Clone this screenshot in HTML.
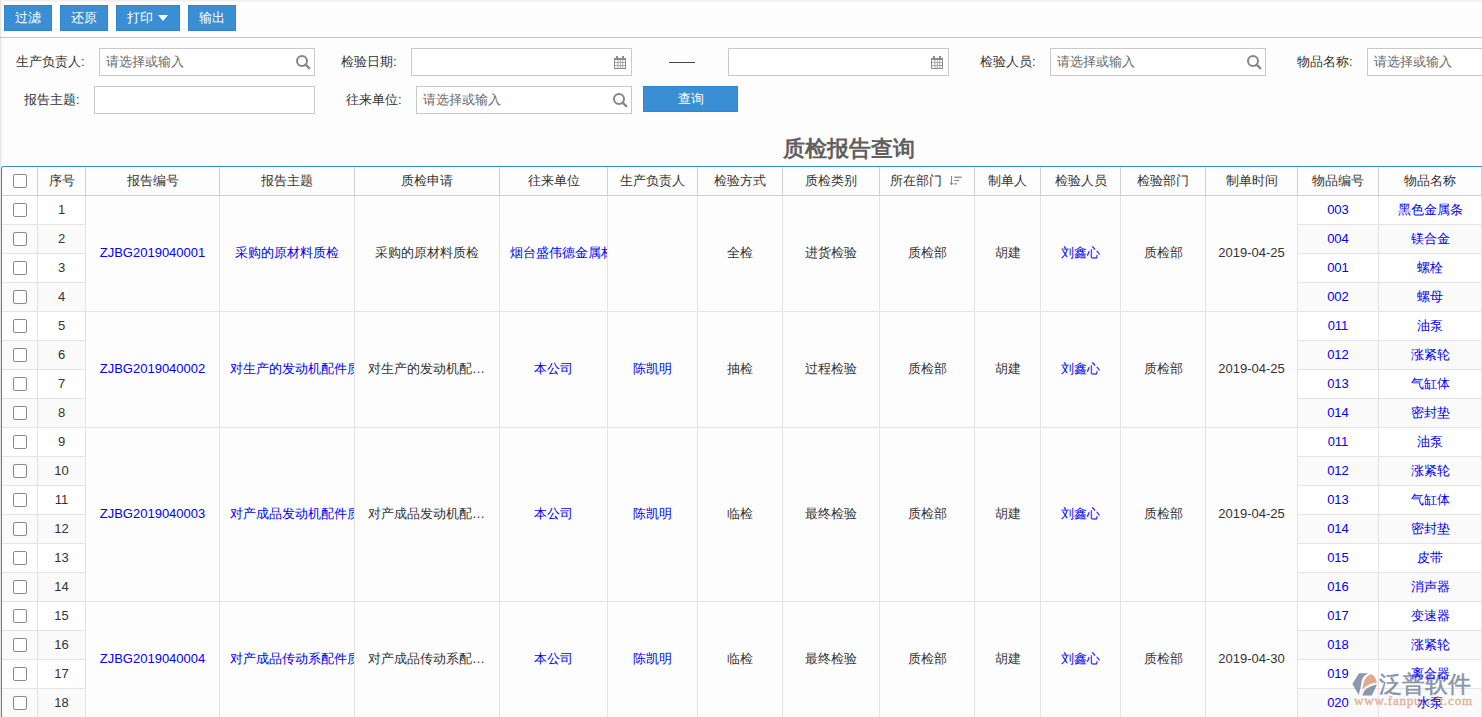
<!DOCTYPE html>
<html><head><meta charset="utf-8"><title>质检报告查询</title>
<style>
*{box-sizing:border-box;margin:0;padding:0}
html,body{width:1482px;height:717px;overflow:hidden;background:#fdfdfd;font-family:"Liberation Sans",sans-serif;font-size:13px;color:#333}
.a{position:absolute}
.btn{position:absolute;top:5px;height:26px;background:#3a8fd4;border:1px solid #2f86cf;color:#fff;font-size:13px;line-height:23px;text-align:center}
.lbl{position:absolute;font-size:13px;color:#333;line-height:15px;white-space:nowrap}
.inp{position:absolute;height:28px;border:1px solid #c9c9c9;background:#fff}
.ph{position:absolute;left:6px;top:5px;font-size:13px;line-height:15px;color:#6a6a6a;white-space:nowrap}
.vl{position:absolute;width:1px;background:#e3e3e3}
.hl{position:absolute;height:1px;background:#e3e3e3}
.c{position:absolute;z-index:2;text-align:center;white-space:nowrap;overflow:hidden;line-height:15px}
.lk{color:#0000ff}
.cb{position:absolute;width:14px;height:14px;border:1px solid #8a8a8a;border-radius:2px;background:#fff}
</style></head><body>

<div class="a" style="left:0;top:0;width:1482px;height:1px;background:#efefef"></div>
<div class="a" style="left:0;top:1px;width:1482px;height:1px;background:#f8f8f8"></div>
<div class="a" style="left:0;top:0;width:1px;height:717px;background:#e6e6e6"></div>
<div class="a" style="left:1px;top:0;width:1px;height:717px;background:#f3f3f3"></div>
<div class="a" style="left:2px;top:0;width:1px;height:717px;background:#fafafa"></div>
<div class="btn" style="left:4px;width:48px">过滤</div>
<div class="btn" style="left:60px;width:48px">还原</div>
<div class="btn" style="left:116px;width:64px;text-align:left;padding-left:10px">打印<span class="a" style="left:41px;top:9px;width:0;height:0;border-left:5px solid transparent;border-right:5px solid transparent;border-top:6px solid #fff"></span></div>
<div class="btn" style="left:188px;width:48px">输出</div>
<div class="a" style="left:0;top:37px;width:1482px;height:1px;background:#c6c6c6"></div>
<div class="lbl" style="left:16px;top:54px">生产负责人:</div>
<div class="inp" style="left:99px;top:48px;width:216px"><span class="ph">请选择或输入</span><svg class="a" style="right:2px;top:4px" width="18" height="18" viewBox="0 0 18 18"><circle cx="8" cy="8" r="5" fill="none" stroke="#858585" stroke-width="2"/><path d="M11.6 11.6 L15.3 15.3" stroke="#858585" stroke-width="2.3" stroke-linecap="round"/></svg></div>
<div class="lbl" style="left:341px;top:54px">检验日期:</div>
<div class="inp" style="left:411px;top:48px;width:221px"><svg class="a" style="right:5px;top:7px" width="12" height="13" viewBox="0 0 12 13"><g fill="#8a8a8a"><rect x="2" y="0" width="2" height="3"/><rect x="8" y="0" width="2" height="3"/><rect x="0" y="2" width="12" height="2"/><rect x="0" y="2" width="1" height="11"/><rect x="11" y="2" width="1" height="11"/><rect x="0" y="12" width="12" height="1"/></g><g fill="#a8a8a8"><rect x="3.4" y="4" width="1" height="8"/><rect x="5.8" y="4" width="1" height="8"/><rect x="8.2" y="4" width="1" height="8"/><rect x="1" y="6" width="10" height="1"/><rect x="1" y="9" width="10" height="1"/></g></svg></div>
<div class="a" style="left:669px;top:62px;width:26px;height:1px;background:#444"></div>
<div class="inp" style="left:728px;top:48px;width:221px"><svg class="a" style="right:5px;top:7px" width="12" height="13" viewBox="0 0 12 13"><g fill="#8a8a8a"><rect x="2" y="0" width="2" height="3"/><rect x="8" y="0" width="2" height="3"/><rect x="0" y="2" width="12" height="2"/><rect x="0" y="2" width="1" height="11"/><rect x="11" y="2" width="1" height="11"/><rect x="0" y="12" width="12" height="1"/></g><g fill="#a8a8a8"><rect x="3.4" y="4" width="1" height="8"/><rect x="5.8" y="4" width="1" height="8"/><rect x="8.2" y="4" width="1" height="8"/><rect x="1" y="6" width="10" height="1"/><rect x="1" y="9" width="10" height="1"/></g></svg></div>
<div class="lbl" style="left:980px;top:54px">检验人员:</div>
<div class="inp" style="left:1050px;top:48px;width:216px"><span class="ph">请选择或输入</span><svg class="a" style="right:2px;top:4px" width="18" height="18" viewBox="0 0 18 18"><circle cx="8" cy="8" r="5" fill="none" stroke="#858585" stroke-width="2"/><path d="M11.6 11.6 L15.3 15.3" stroke="#858585" stroke-width="2.3" stroke-linecap="round"/></svg></div>
<div class="lbl" style="left:1297px;top:54px">物品名称:</div>
<div class="inp" style="left:1367px;top:48px;width:140px"><span class="ph">请选择或输入</span></div>
<div class="lbl" style="left:24px;top:92px">报告主题:</div>
<div class="inp" style="left:94px;top:86px;width:221px"></div>
<div class="lbl" style="left:346px;top:92px">往来单位:</div>
<div class="inp" style="left:416px;top:86px;width:216px"><span class="ph">请选择或输入</span><svg class="a" style="right:2px;top:4px" width="18" height="18" viewBox="0 0 18 18"><circle cx="8" cy="8" r="5" fill="none" stroke="#858585" stroke-width="2"/><path d="M11.6 11.6 L15.3 15.3" stroke="#858585" stroke-width="2.3" stroke-linecap="round"/></svg></div>
<div class="btn" style="left:643px;top:86px;width:95px">查询</div>
<div class="a" style="left:783px;top:136px;font-size:22px;font-weight:bold;color:#606060;line-height:26px;white-space:nowrap">质检报告查询</div>
<div class="a" style="left:1px;top:166px;width:1502px;height:571px;border-top:1px solid #3a8dd0;border-left:1px solid #3a86c8;border-top-left-radius:3px;z-index:3"></div>
<div class="a" style="left:2px;top:195px;width:1482px;height:1px;background:#cfcfcf"></div>
<div class="a" style="left:37px;top:167px;width:1px;height:28px;background:#d0d0d0"></div>
<div class="a" style="left:85px;top:167px;width:1px;height:28px;background:#d0d0d0"></div>
<div class="a" style="left:219px;top:167px;width:1px;height:28px;background:#d0d0d0"></div>
<div class="a" style="left:354px;top:167px;width:1px;height:28px;background:#d0d0d0"></div>
<div class="a" style="left:499px;top:167px;width:1px;height:28px;background:#d0d0d0"></div>
<div class="a" style="left:607px;top:167px;width:1px;height:28px;background:#d0d0d0"></div>
<div class="a" style="left:697px;top:167px;width:1px;height:28px;background:#d0d0d0"></div>
<div class="a" style="left:782px;top:167px;width:1px;height:28px;background:#d0d0d0"></div>
<div class="a" style="left:879px;top:167px;width:1px;height:28px;background:#d0d0d0"></div>
<div class="a" style="left:974px;top:167px;width:1px;height:28px;background:#d0d0d0"></div>
<div class="a" style="left:1040px;top:167px;width:1px;height:28px;background:#d0d0d0"></div>
<div class="a" style="left:1120px;top:167px;width:1px;height:28px;background:#d0d0d0"></div>
<div class="a" style="left:1205px;top:167px;width:1px;height:28px;background:#d0d0d0"></div>
<div class="a" style="left:1297px;top:167px;width:1px;height:28px;background:#d0d0d0"></div>
<div class="a" style="left:1378px;top:167px;width:1px;height:28px;background:#d0d0d0"></div>
<div class="a" style="left:1481px;top:167px;width:1px;height:28px;background:#d0d0d0"></div>
<div class="cb" style="left:13px;top:174px"></div>
<div class="c" style="left:38px;top:173px;width:47px">序号</div>
<div class="c" style="left:86px;top:173px;width:133px">报告编号</div>
<div class="c" style="left:220px;top:173px;width:134px">报告主题</div>
<div class="c" style="left:355px;top:173px;width:144px">质检申请</div>
<div class="c" style="left:500px;top:173px;width:107px">往来单位</div>
<div class="c" style="left:608px;top:173px;width:89px">生产负责人</div>
<div class="c" style="left:698px;top:173px;width:84px">检验方式</div>
<div class="c" style="left:783px;top:173px;width:96px">质检类别</div>
<div class="c" style="left:890px;top:173px;text-align:left">所在部门</div>
<div class="c" style="left:975px;top:173px;width:65px">制单人</div>
<div class="c" style="left:1041px;top:173px;width:79px">检验人员</div>
<div class="c" style="left:1121px;top:173px;width:84px">检验部门</div>
<div class="c" style="left:1206px;top:173px;width:91px">制单时间</div>
<div class="c" style="left:1298px;top:173px;width:80px">物品编号</div>
<div class="c" style="left:1379px;top:173px;width:102px">物品名称</div>
<svg class="a" style="left:948px;top:175px" width="14" height="11" viewBox="0 0 14 11"><g fill="#888"><rect x="3" y="1" width="1.1" height="8.5"/><path d="M1.6 8 L3.55 10.2 L5.5 8 Z"/><rect x="6.3" y="1.6" width="7.4" height="1.3"/><rect x="6.3" y="4.9" width="4.8" height="1.2"/><rect x="6.3" y="8.2" width="2.5" height="1.3"/></g></svg>
<div class="a" style="left:2px;top:196px;width:35px;height:28px;background:#fff"></div>
<div class="a" style="left:38px;top:196px;width:47px;height:28px;background:#fff"></div>
<div class="a" style="left:1298px;top:196px;width:80px;height:28px;background:#fff"></div>
<div class="a" style="left:1379px;top:196px;width:102px;height:28px;background:#fff"></div>
<div class="cb" style="left:13px;top:203px"></div>
<div class="c" style="left:38px;top:202px;width:47px">1</div>
<div class="c lk" style="left:1298px;top:202px;width:80px">003</div>
<div class="c lk" style="left:1379px;top:202px;width:102px">黑色金属条</div>
<div class="hl" style="left:2px;top:224px;width:35px"></div>
<div class="hl" style="left:38px;top:224px;width:47px"></div>
<div class="hl" style="left:1298px;top:224px;width:80px"></div>
<div class="hl" style="left:1379px;top:224px;width:102px"></div>
<div class="a" style="left:2px;top:225px;width:35px;height:28px;background:#fafafa"></div>
<div class="a" style="left:38px;top:225px;width:47px;height:28px;background:#fafafa"></div>
<div class="a" style="left:1298px;top:225px;width:80px;height:28px;background:#fafafa"></div>
<div class="a" style="left:1379px;top:225px;width:102px;height:28px;background:#fafafa"></div>
<div class="cb" style="left:13px;top:232px"></div>
<div class="c" style="left:38px;top:231px;width:47px">2</div>
<div class="c lk" style="left:1298px;top:231px;width:80px">004</div>
<div class="c lk" style="left:1379px;top:231px;width:102px">镁合金</div>
<div class="hl" style="left:2px;top:253px;width:35px"></div>
<div class="hl" style="left:38px;top:253px;width:47px"></div>
<div class="hl" style="left:1298px;top:253px;width:80px"></div>
<div class="hl" style="left:1379px;top:253px;width:102px"></div>
<div class="a" style="left:2px;top:254px;width:35px;height:28px;background:#fff"></div>
<div class="a" style="left:38px;top:254px;width:47px;height:28px;background:#fff"></div>
<div class="a" style="left:1298px;top:254px;width:80px;height:28px;background:#fff"></div>
<div class="a" style="left:1379px;top:254px;width:102px;height:28px;background:#fff"></div>
<div class="cb" style="left:13px;top:261px"></div>
<div class="c" style="left:38px;top:260px;width:47px">3</div>
<div class="c lk" style="left:1298px;top:260px;width:80px">001</div>
<div class="c lk" style="left:1379px;top:260px;width:102px">螺栓</div>
<div class="hl" style="left:2px;top:282px;width:35px"></div>
<div class="hl" style="left:38px;top:282px;width:47px"></div>
<div class="hl" style="left:1298px;top:282px;width:80px"></div>
<div class="hl" style="left:1379px;top:282px;width:102px"></div>
<div class="a" style="left:2px;top:283px;width:35px;height:28px;background:#fafafa"></div>
<div class="a" style="left:38px;top:283px;width:47px;height:28px;background:#fafafa"></div>
<div class="a" style="left:1298px;top:283px;width:80px;height:28px;background:#fafafa"></div>
<div class="a" style="left:1379px;top:283px;width:102px;height:28px;background:#fafafa"></div>
<div class="cb" style="left:13px;top:290px"></div>
<div class="c" style="left:38px;top:289px;width:47px">4</div>
<div class="c lk" style="left:1298px;top:289px;width:80px">002</div>
<div class="c lk" style="left:1379px;top:289px;width:102px">螺母</div>
<div class="c lk" style="left:86px;top:245px;width:133px">ZJBG2019040001</div>
<div class="c lk" style="left:220px;top:245px;width:134px">采购的原材料质检</div>
<div class="c" style="left:355px;top:245px;width:144px">采购的原材料质检</div>
<div class="c lk" style="left:500px;top:245px;width:107px;text-align:left;padding-left:10px">烟台盛伟德金属材料有限公司</div>
<div class="c lk" style="left:608px;top:245px;width:89px"></div>
<div class="c" style="left:698px;top:245px;width:84px">全检</div>
<div class="c" style="left:783px;top:245px;width:96px">进货检验</div>
<div class="c" style="left:880px;top:245px;width:94px">质检部</div>
<div class="c" style="left:975px;top:245px;width:65px">胡建</div>
<div class="c lk" style="left:1041px;top:245px;width:79px">刘鑫心</div>
<div class="c" style="left:1121px;top:245px;width:84px">质检部</div>
<div class="c" style="left:1206px;top:245px;width:91px">2019-04-25</div>
<div class="hl" style="left:2px;top:311px;width:1482px"></div>
<div class="a" style="left:2px;top:312px;width:35px;height:28px;background:#fff"></div>
<div class="a" style="left:38px;top:312px;width:47px;height:28px;background:#fff"></div>
<div class="a" style="left:1298px;top:312px;width:80px;height:28px;background:#fff"></div>
<div class="a" style="left:1379px;top:312px;width:102px;height:28px;background:#fff"></div>
<div class="cb" style="left:13px;top:319px"></div>
<div class="c" style="left:38px;top:318px;width:47px">5</div>
<div class="c lk" style="left:1298px;top:318px;width:80px">011</div>
<div class="c lk" style="left:1379px;top:318px;width:102px">油泵</div>
<div class="hl" style="left:2px;top:340px;width:35px"></div>
<div class="hl" style="left:38px;top:340px;width:47px"></div>
<div class="hl" style="left:1298px;top:340px;width:80px"></div>
<div class="hl" style="left:1379px;top:340px;width:102px"></div>
<div class="a" style="left:2px;top:341px;width:35px;height:28px;background:#fafafa"></div>
<div class="a" style="left:38px;top:341px;width:47px;height:28px;background:#fafafa"></div>
<div class="a" style="left:1298px;top:341px;width:80px;height:28px;background:#fafafa"></div>
<div class="a" style="left:1379px;top:341px;width:102px;height:28px;background:#fafafa"></div>
<div class="cb" style="left:13px;top:348px"></div>
<div class="c" style="left:38px;top:347px;width:47px">6</div>
<div class="c lk" style="left:1298px;top:347px;width:80px">012</div>
<div class="c lk" style="left:1379px;top:347px;width:102px">涨紧轮</div>
<div class="hl" style="left:2px;top:369px;width:35px"></div>
<div class="hl" style="left:38px;top:369px;width:47px"></div>
<div class="hl" style="left:1298px;top:369px;width:80px"></div>
<div class="hl" style="left:1379px;top:369px;width:102px"></div>
<div class="a" style="left:2px;top:370px;width:35px;height:28px;background:#fff"></div>
<div class="a" style="left:38px;top:370px;width:47px;height:28px;background:#fff"></div>
<div class="a" style="left:1298px;top:370px;width:80px;height:28px;background:#fff"></div>
<div class="a" style="left:1379px;top:370px;width:102px;height:28px;background:#fff"></div>
<div class="cb" style="left:13px;top:377px"></div>
<div class="c" style="left:38px;top:376px;width:47px">7</div>
<div class="c lk" style="left:1298px;top:376px;width:80px">013</div>
<div class="c lk" style="left:1379px;top:376px;width:102px">气缸体</div>
<div class="hl" style="left:2px;top:398px;width:35px"></div>
<div class="hl" style="left:38px;top:398px;width:47px"></div>
<div class="hl" style="left:1298px;top:398px;width:80px"></div>
<div class="hl" style="left:1379px;top:398px;width:102px"></div>
<div class="a" style="left:2px;top:399px;width:35px;height:28px;background:#fafafa"></div>
<div class="a" style="left:38px;top:399px;width:47px;height:28px;background:#fafafa"></div>
<div class="a" style="left:1298px;top:399px;width:80px;height:28px;background:#fafafa"></div>
<div class="a" style="left:1379px;top:399px;width:102px;height:28px;background:#fafafa"></div>
<div class="cb" style="left:13px;top:406px"></div>
<div class="c" style="left:38px;top:405px;width:47px">8</div>
<div class="c lk" style="left:1298px;top:405px;width:80px">014</div>
<div class="c lk" style="left:1379px;top:405px;width:102px">密封垫</div>
<div class="c lk" style="left:86px;top:361px;width:133px">ZJBG2019040002</div>
<div class="c lk" style="left:220px;top:361px;width:134px;text-align:left;padding-left:10px">对生产的发动机配件质检</div>
<div class="c" style="left:355px;top:361px;width:144px;padding:0 13px;text-overflow:ellipsis">对生产的发动机配件质检</div>
<div class="c lk" style="left:500px;top:361px;width:107px">本公司</div>
<div class="c lk" style="left:608px;top:361px;width:89px">陈凯明</div>
<div class="c" style="left:698px;top:361px;width:84px">抽检</div>
<div class="c" style="left:783px;top:361px;width:96px">过程检验</div>
<div class="c" style="left:880px;top:361px;width:94px">质检部</div>
<div class="c" style="left:975px;top:361px;width:65px">胡建</div>
<div class="c lk" style="left:1041px;top:361px;width:79px">刘鑫心</div>
<div class="c" style="left:1121px;top:361px;width:84px">质检部</div>
<div class="c" style="left:1206px;top:361px;width:91px">2019-04-25</div>
<div class="hl" style="left:2px;top:427px;width:1482px"></div>
<div class="a" style="left:2px;top:428px;width:35px;height:28px;background:#fff"></div>
<div class="a" style="left:38px;top:428px;width:47px;height:28px;background:#fff"></div>
<div class="a" style="left:1298px;top:428px;width:80px;height:28px;background:#fff"></div>
<div class="a" style="left:1379px;top:428px;width:102px;height:28px;background:#fff"></div>
<div class="cb" style="left:13px;top:435px"></div>
<div class="c" style="left:38px;top:434px;width:47px">9</div>
<div class="c lk" style="left:1298px;top:434px;width:80px">011</div>
<div class="c lk" style="left:1379px;top:434px;width:102px">油泵</div>
<div class="hl" style="left:2px;top:456px;width:35px"></div>
<div class="hl" style="left:38px;top:456px;width:47px"></div>
<div class="hl" style="left:1298px;top:456px;width:80px"></div>
<div class="hl" style="left:1379px;top:456px;width:102px"></div>
<div class="a" style="left:2px;top:457px;width:35px;height:28px;background:#fafafa"></div>
<div class="a" style="left:38px;top:457px;width:47px;height:28px;background:#fafafa"></div>
<div class="a" style="left:1298px;top:457px;width:80px;height:28px;background:#fafafa"></div>
<div class="a" style="left:1379px;top:457px;width:102px;height:28px;background:#fafafa"></div>
<div class="cb" style="left:13px;top:464px"></div>
<div class="c" style="left:38px;top:463px;width:47px">10</div>
<div class="c lk" style="left:1298px;top:463px;width:80px">012</div>
<div class="c lk" style="left:1379px;top:463px;width:102px">涨紧轮</div>
<div class="hl" style="left:2px;top:485px;width:35px"></div>
<div class="hl" style="left:38px;top:485px;width:47px"></div>
<div class="hl" style="left:1298px;top:485px;width:80px"></div>
<div class="hl" style="left:1379px;top:485px;width:102px"></div>
<div class="a" style="left:2px;top:486px;width:35px;height:28px;background:#fff"></div>
<div class="a" style="left:38px;top:486px;width:47px;height:28px;background:#fff"></div>
<div class="a" style="left:1298px;top:486px;width:80px;height:28px;background:#fff"></div>
<div class="a" style="left:1379px;top:486px;width:102px;height:28px;background:#fff"></div>
<div class="cb" style="left:13px;top:493px"></div>
<div class="c" style="left:38px;top:492px;width:47px">11</div>
<div class="c lk" style="left:1298px;top:492px;width:80px">013</div>
<div class="c lk" style="left:1379px;top:492px;width:102px">气缸体</div>
<div class="hl" style="left:2px;top:514px;width:35px"></div>
<div class="hl" style="left:38px;top:514px;width:47px"></div>
<div class="hl" style="left:1298px;top:514px;width:80px"></div>
<div class="hl" style="left:1379px;top:514px;width:102px"></div>
<div class="a" style="left:2px;top:515px;width:35px;height:28px;background:#fafafa"></div>
<div class="a" style="left:38px;top:515px;width:47px;height:28px;background:#fafafa"></div>
<div class="a" style="left:1298px;top:515px;width:80px;height:28px;background:#fafafa"></div>
<div class="a" style="left:1379px;top:515px;width:102px;height:28px;background:#fafafa"></div>
<div class="cb" style="left:13px;top:522px"></div>
<div class="c" style="left:38px;top:521px;width:47px">12</div>
<div class="c lk" style="left:1298px;top:521px;width:80px">014</div>
<div class="c lk" style="left:1379px;top:521px;width:102px">密封垫</div>
<div class="hl" style="left:2px;top:543px;width:35px"></div>
<div class="hl" style="left:38px;top:543px;width:47px"></div>
<div class="hl" style="left:1298px;top:543px;width:80px"></div>
<div class="hl" style="left:1379px;top:543px;width:102px"></div>
<div class="a" style="left:2px;top:544px;width:35px;height:28px;background:#fff"></div>
<div class="a" style="left:38px;top:544px;width:47px;height:28px;background:#fff"></div>
<div class="a" style="left:1298px;top:544px;width:80px;height:28px;background:#fff"></div>
<div class="a" style="left:1379px;top:544px;width:102px;height:28px;background:#fff"></div>
<div class="cb" style="left:13px;top:551px"></div>
<div class="c" style="left:38px;top:550px;width:47px">13</div>
<div class="c lk" style="left:1298px;top:550px;width:80px">015</div>
<div class="c lk" style="left:1379px;top:550px;width:102px">皮带</div>
<div class="hl" style="left:2px;top:572px;width:35px"></div>
<div class="hl" style="left:38px;top:572px;width:47px"></div>
<div class="hl" style="left:1298px;top:572px;width:80px"></div>
<div class="hl" style="left:1379px;top:572px;width:102px"></div>
<div class="a" style="left:2px;top:573px;width:35px;height:28px;background:#fafafa"></div>
<div class="a" style="left:38px;top:573px;width:47px;height:28px;background:#fafafa"></div>
<div class="a" style="left:1298px;top:573px;width:80px;height:28px;background:#fafafa"></div>
<div class="a" style="left:1379px;top:573px;width:102px;height:28px;background:#fafafa"></div>
<div class="cb" style="left:13px;top:580px"></div>
<div class="c" style="left:38px;top:579px;width:47px">14</div>
<div class="c lk" style="left:1298px;top:579px;width:80px">016</div>
<div class="c lk" style="left:1379px;top:579px;width:102px">消声器</div>
<div class="c lk" style="left:86px;top:506px;width:133px">ZJBG2019040003</div>
<div class="c lk" style="left:220px;top:506px;width:134px;text-align:left;padding-left:10px">对产成品发动机配件质检</div>
<div class="c" style="left:355px;top:506px;width:144px;padding:0 13px;text-overflow:ellipsis">对产成品发动机配件质检</div>
<div class="c lk" style="left:500px;top:506px;width:107px">本公司</div>
<div class="c lk" style="left:608px;top:506px;width:89px">陈凯明</div>
<div class="c" style="left:698px;top:506px;width:84px">临检</div>
<div class="c" style="left:783px;top:506px;width:96px">最终检验</div>
<div class="c" style="left:880px;top:506px;width:94px">质检部</div>
<div class="c" style="left:975px;top:506px;width:65px">胡建</div>
<div class="c lk" style="left:1041px;top:506px;width:79px">刘鑫心</div>
<div class="c" style="left:1121px;top:506px;width:84px">质检部</div>
<div class="c" style="left:1206px;top:506px;width:91px">2019-04-25</div>
<div class="hl" style="left:2px;top:601px;width:1482px"></div>
<div class="a" style="left:2px;top:602px;width:35px;height:28px;background:#fff"></div>
<div class="a" style="left:38px;top:602px;width:47px;height:28px;background:#fff"></div>
<div class="a" style="left:1298px;top:602px;width:80px;height:28px;background:#fff"></div>
<div class="a" style="left:1379px;top:602px;width:102px;height:28px;background:#fff"></div>
<div class="cb" style="left:13px;top:609px"></div>
<div class="c" style="left:38px;top:608px;width:47px">15</div>
<div class="c lk" style="left:1298px;top:608px;width:80px">017</div>
<div class="c lk" style="left:1379px;top:608px;width:102px">变速器</div>
<div class="hl" style="left:2px;top:630px;width:35px"></div>
<div class="hl" style="left:38px;top:630px;width:47px"></div>
<div class="hl" style="left:1298px;top:630px;width:80px"></div>
<div class="hl" style="left:1379px;top:630px;width:102px"></div>
<div class="a" style="left:2px;top:631px;width:35px;height:28px;background:#fafafa"></div>
<div class="a" style="left:38px;top:631px;width:47px;height:28px;background:#fafafa"></div>
<div class="a" style="left:1298px;top:631px;width:80px;height:28px;background:#fafafa"></div>
<div class="a" style="left:1379px;top:631px;width:102px;height:28px;background:#fafafa"></div>
<div class="cb" style="left:13px;top:638px"></div>
<div class="c" style="left:38px;top:637px;width:47px">16</div>
<div class="c lk" style="left:1298px;top:637px;width:80px">018</div>
<div class="c lk" style="left:1379px;top:637px;width:102px">涨紧轮</div>
<div class="hl" style="left:2px;top:659px;width:35px"></div>
<div class="hl" style="left:38px;top:659px;width:47px"></div>
<div class="hl" style="left:1298px;top:659px;width:80px"></div>
<div class="hl" style="left:1379px;top:659px;width:102px"></div>
<div class="a" style="left:2px;top:660px;width:35px;height:28px;background:#fff"></div>
<div class="a" style="left:38px;top:660px;width:47px;height:28px;background:#fff"></div>
<div class="a" style="left:1298px;top:660px;width:80px;height:28px;background:#fff"></div>
<div class="a" style="left:1379px;top:660px;width:102px;height:28px;background:#fff"></div>
<div class="cb" style="left:13px;top:667px"></div>
<div class="c" style="left:38px;top:666px;width:47px">17</div>
<div class="c lk" style="left:1298px;top:666px;width:80px">019</div>
<div class="c lk" style="left:1379px;top:666px;width:102px">离合器</div>
<div class="hl" style="left:2px;top:688px;width:35px"></div>
<div class="hl" style="left:38px;top:688px;width:47px"></div>
<div class="hl" style="left:1298px;top:688px;width:80px"></div>
<div class="hl" style="left:1379px;top:688px;width:102px"></div>
<div class="a" style="left:2px;top:689px;width:35px;height:28px;background:#fafafa"></div>
<div class="a" style="left:38px;top:689px;width:47px;height:28px;background:#fafafa"></div>
<div class="a" style="left:1298px;top:689px;width:80px;height:28px;background:#fafafa"></div>
<div class="a" style="left:1379px;top:689px;width:102px;height:28px;background:#fafafa"></div>
<div class="cb" style="left:13px;top:696px"></div>
<div class="c" style="left:38px;top:695px;width:47px">18</div>
<div class="c lk" style="left:1298px;top:695px;width:80px">020</div>
<div class="c lk" style="left:1379px;top:695px;width:102px">水泵</div>
<div class="c lk" style="left:86px;top:651px;width:133px">ZJBG2019040004</div>
<div class="c lk" style="left:220px;top:651px;width:134px;text-align:left;padding-left:10px">对产成品传动系配件质检</div>
<div class="c" style="left:355px;top:651px;width:144px;padding:0 13px;text-overflow:ellipsis">对产成品传动系配件质检</div>
<div class="c lk" style="left:500px;top:651px;width:107px">本公司</div>
<div class="c lk" style="left:608px;top:651px;width:89px">陈凯明</div>
<div class="c" style="left:698px;top:651px;width:84px">临检</div>
<div class="c" style="left:783px;top:651px;width:96px">最终检验</div>
<div class="c" style="left:880px;top:651px;width:94px">质检部</div>
<div class="c" style="left:975px;top:651px;width:65px">胡建</div>
<div class="c lk" style="left:1041px;top:651px;width:79px">刘鑫心</div>
<div class="c" style="left:1121px;top:651px;width:84px">质检部</div>
<div class="c" style="left:1206px;top:651px;width:91px">2019-04-30</div>
<div class="hl" style="left:2px;top:717px;width:1482px"></div>
<div class="vl" style="left:37px;top:196px;height:522px"></div>
<div class="vl" style="left:85px;top:196px;height:522px"></div>
<div class="vl" style="left:219px;top:196px;height:522px"></div>
<div class="vl" style="left:354px;top:196px;height:522px"></div>
<div class="vl" style="left:499px;top:196px;height:522px"></div>
<div class="vl" style="left:607px;top:196px;height:522px"></div>
<div class="vl" style="left:697px;top:196px;height:522px"></div>
<div class="vl" style="left:782px;top:196px;height:522px"></div>
<div class="vl" style="left:879px;top:196px;height:522px"></div>
<div class="vl" style="left:974px;top:196px;height:522px"></div>
<div class="vl" style="left:1040px;top:196px;height:522px"></div>
<div class="vl" style="left:1120px;top:196px;height:522px"></div>
<div class="vl" style="left:1205px;top:196px;height:522px"></div>
<div class="vl" style="left:1297px;top:196px;height:522px"></div>
<div class="vl" style="left:1378px;top:196px;height:522px"></div>
<div class="vl" style="left:1481px;top:196px;height:522px"></div>
<svg class="a" style="left:1350px;top:671px" width="30" height="27" viewBox="0 0 30 27"><g opacity="0.9">
<path d="M2.4 13 L8.9 2.3 L18.5 2.3 C13.5 4.5 11.5 8.5 11.5 12 L8.8 24 Z" fill="#7f8ca3"/>
<path d="M12.6 18.3 C12.8 9 17.5 3.5 21.2 3.2 C24 3.8 26.3 8 27 11.6 C21 12.4 16 14.5 12.6 18.3 Z" fill="#e19f84"/>
<path d="M12.3 24.5 L14.5 19.5 C18 16 23 14 27 13.4 L21.8 24.5 Z" fill="#7f8ca3"/>
</g></svg>
<div class="a" style="left:1379px;top:665px;font-size:23px;line-height:38px;color:#7f8ca3;opacity:0.92;white-space:nowrap;-webkit-text-stroke:0.5px #7f8ca3">泛普软件</div>
<div class="a" style="left:1354px;top:693px;font-family:'Liberation Serif',serif;font-size:13px;line-height:15px;color:#e2a487;opacity:0.9;white-space:nowrap;letter-spacing:0.8px;-webkit-text-stroke:0.3px #e2a487">www.fanpusoft.com</div>
</body></html>
